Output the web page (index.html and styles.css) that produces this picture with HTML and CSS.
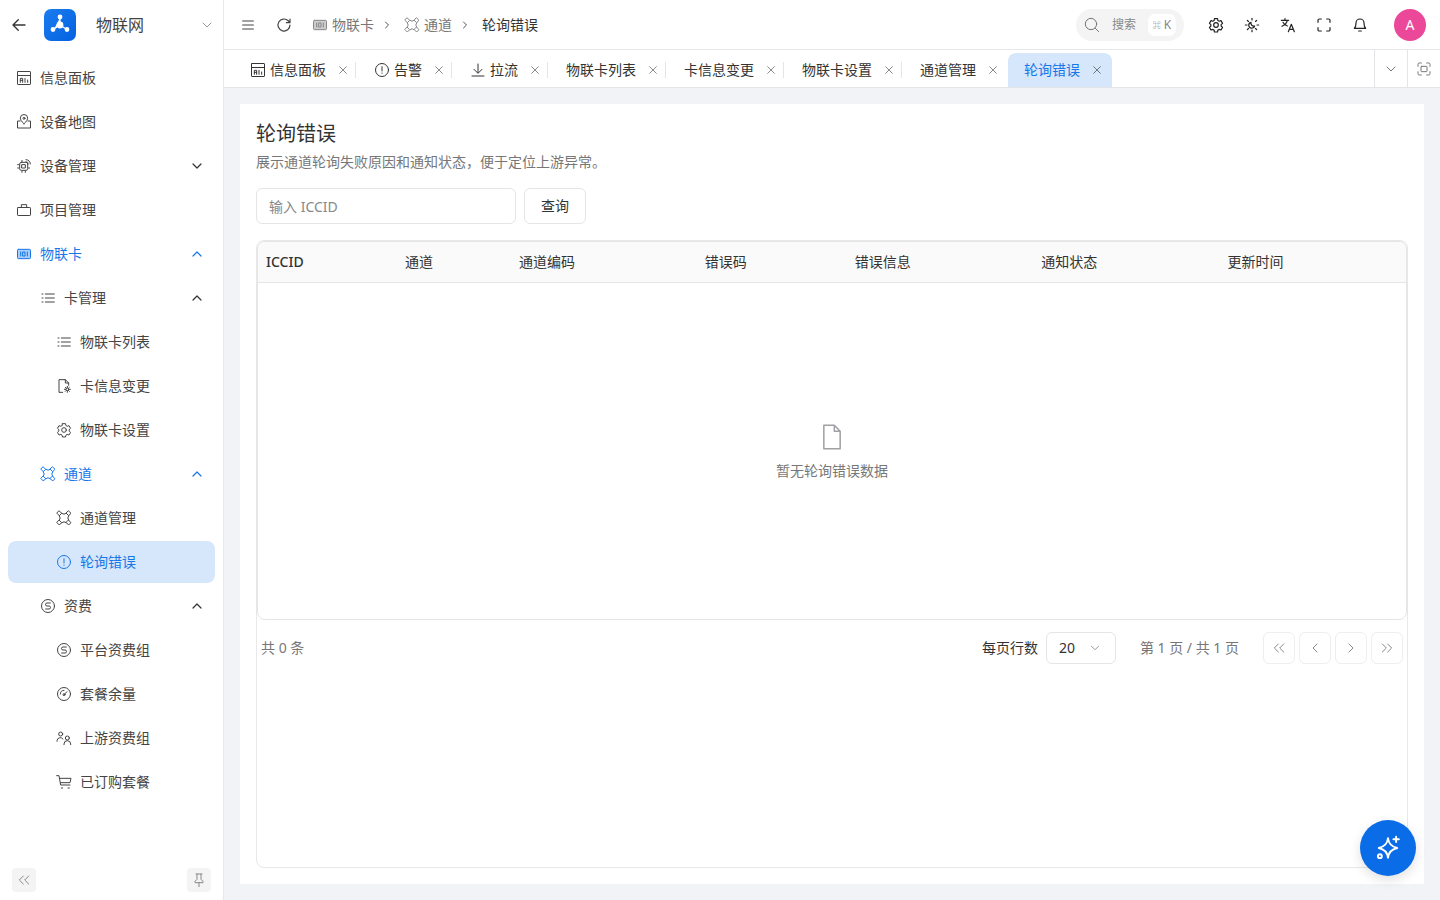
FILE: index.html
```html
<!DOCTYPE html>
<html>
<head>
    <title>轮询错误</title>
    <link rel="stylesheet" href="styles.css">
</head>
<body>
<svg width="0" height="0" class="sprite">
    <defs>
        <symbol id="i-dash" viewBox="0 0 24 24"><rect x="2.250" y="2.250" width="19.500" height="19.500" rx=".8"/><path d="M2.250 8.250h19.500M6.500 18.500v-6h3.500v6M6.500 15.500h3.500M13.500 18.500v-6M17.500 18.500v-3.500"/></symbol>
        <symbol id="i-map" viewBox="0 0 24 24"><path d="M12 14.500s5.500-3.800 5.500-8.200a5.500 5.500 0 0 0-11 0c0 4.400 5.500 8.200 5.500 8.200z"/><circle cx="12" cy="6.500" r="1.500"/><path d="M6 10.500H2.250v10.500h19.500V10.500H18"/></symbol>
        <symbol id="i-chip" viewBox="0 0 24 24"><rect x="5.500" y="6.500" width="12" height="12" rx="2.500"/><rect x="9" y="10" width="5" height="5"/><path d="M9 3.500v2M2.500 10h2M2.500 15h2M9 19.500v2M14 19.500v2M18.500 15h2M15 2.500a6 6 0 0 1 6.500 6.500M15 5.500a3.500 3.500 0 0 1 3.500 3.500"/></symbol>
        <symbol id="i-bag" viewBox="0 0 24 24"><rect x="2.250" y="8.250" width="19.500" height="12" rx="1"/><path d="M8 8.250V4h8v4.250"/></symbol>
        <symbol id="i-card" viewBox="0 0 24 24"><rect class="tint" x="2.250" y="5" width="19.500" height="14" rx="1.500"/><path d="M7 9v6M10.500 9h3v6h-3zM17 9v6"/></symbol>
        <symbol id="i-list" viewBox="0 0 24 24"><path d="M8 6h13.500M8 12h13.500M8 18h13.500M3 6h1.500M3 12h1.500M3 18h1.500"/></symbol>
        <symbol id="i-fileset" viewBox="0 0 24 24"><path d="M10 21.500H4.500v-19H14l5 5v3.500M14 2.500v5h5"/><circle cx="17" cy="17" r="2"/><path d="M17 12.500v2M17 19.500v2M12.500 17h2M19.500 17h2M14 14l1.400 1.400M18.600 18.600L20 20M20 14l-1.400 1.400M15.400 18.600L14 20"/></symbol>
        <symbol id="i-gear" viewBox="0 0 24 24"><path d="M9.700 2.500h4.600l.6 2.800 1.900 1.100 2.700-.9 2.300 4-2.100 1.900v2.200l2.100 1.900-2.300 4-2.700-.9-1.900 1.100-.6 2.800H9.700l-.6-2.800-1.900-1.100-2.700.9-2.300-4 2.100-1.900v-2.200L2.200 9.500l2.300-4 2.700.9 1.900-1.100z"/><circle cx="12" cy="12" r="3.500"/></symbol>
        <symbol id="i-channel" viewBox="0 0 24 24"><path d="M5 1.500L8.500 5 5 8.500 1.500 5zM19 1.500L22.500 5 19 8.500 15.500 5zM5 15.500L8.500 19 5 22.500 1.500 19zM19 15.500L22.500 19 19 22.500 15.500 19z"/><path d="M8.500 5Q12 8 15.500 5M8.500 19Q12 16 15.500 19M5 8.500Q8 12 5 15.500M19 8.500Q16 12 19 15.500"/></symbol>
        <symbol id="i-alert" viewBox="0 0 24 24"><circle cx="12" cy="12" r="9.750"/><path d="M12 7v6.500M12 16.500v.5"/></symbol>
        <symbol id="i-money" viewBox="0 0 24 24"><circle cx="12" cy="12" r="9.750"/><path d="M15.500 7.500H10.500a2.200 2.200 0 0 0 0 4.500h3a2.200 2.200 0 0 1 0 4.500H8.500"/></symbol>
        <symbol id="i-gauge" viewBox="0 0 24 24"><circle cx="12" cy="12" r="9.750"/><circle cx="12" cy="13" r="1.500"/><path d="M13 12l3.500-3.500M6.500 12a5.500 5.500 0 0 1 5.500-5.500"/></symbol>
        <symbol id="i-users" viewBox="0 0 24 24"><circle cx="7" cy="6" r="3"/><path d="M1.500 17v-1a5 5 0 0 1 9-2.500"/><circle cx="17" cy="12" r="3"/><path d="M12 22v-1a5 5 0 0 1 10 0v1"/></symbol>
        <symbol id="i-cart" viewBox="0 0 24 24"><path d="M1 2.500h3.500l2.500 14h14M6 6.500h16.500l-1.500 6.500H7"/><path d="M8 21h2M18 21h2"/></symbol>
        <symbol id="i-down" viewBox="0 0 24 24"><path d="M6 9l6 6 6-6"/></symbol>
        <symbol id="i-up" viewBox="0 0 24 24"><path d="M6 15l6-6 6 6"/></symbol>
        <symbol id="i-right" viewBox="0 0 24 24"><path d="M9 6l6 6-6 6"/></symbol>
        <symbol id="i-left" viewBox="0 0 24 24"><path d="M15 6l-6 6 6 6"/></symbol>
        <symbol id="i-dleft" viewBox="0 0 24 24"><path d="M11 6l-6 6 6 6M19 6l-6 6 6 6"/></symbol>
        <symbol id="i-dright" viewBox="0 0 24 24"><path d="M5 6l6 6-6 6M13 6l6 6-6 6"/></symbol>
        <symbol id="i-x" viewBox="0 0 24 24"><path d="M4 4l16 16M20 4L4 20"/></symbol>
        <symbol id="i-download" viewBox="0 0 24 24"><path d="M12 3v13M6 11l6 6 6-6M3 21h18"/></symbol>
    </defs>
</svg>

<div class="app">
    <aside class="sidebar">
        <div class="side-head">
            <svg class="back" viewBox="0 0 24 24"><path d="M20 12H4M11 5l-7 7 7 7"/></svg>
            <div class="logo">
                <svg viewBox="0 0 32 32"><path d="M16 9v7l-6 4M16 16l6 4"/><circle cx="16" cy="16" r="2.800"/><circle cx="16" cy="8" r="1.800"/><circle cx="9" cy="20.500" r="1.800"/><circle cx="23" cy="20.500" r="1.800"/></svg>
            </div>
            <span class="brand">物联网</span>
            <svg class="ico brand-caret"><use href="#i-down"/></svg>
        </div>
        <nav class="menu">
            <a class="item"><svg class="ico"><use href="#i-dash"/></svg><span>信息面板</span></a>
            <a class="item"><svg class="ico"><use href="#i-map"/></svg><span>设备地图</span></a>
            <a class="item"><svg class="ico"><use href="#i-chip"/></svg><span>设备管理</span><svg class="ico caret"><use href="#i-down"/></svg></a>
            <a class="item"><svg class="ico"><use href="#i-bag"/></svg><span>项目管理</span></a>
            <a class="item open"><svg class="ico"><use href="#i-card"/></svg><span>物联卡</span><svg class="ico caret"><use href="#i-up"/></svg></a>
            <a class="item lv2"><svg class="ico"><use href="#i-list"/></svg><span>卡管理</span><svg class="ico caret"><use href="#i-up"/></svg></a>
            <a class="item lv3"><svg class="ico"><use href="#i-list"/></svg><span>物联卡列表</span></a>
            <a class="item lv3"><svg class="ico"><use href="#i-fileset"/></svg><span>卡信息变更</span></a>
            <a class="item lv3"><svg class="ico"><use href="#i-gear"/></svg><span>物联卡设置</span></a>
            <a class="item lv2 open"><svg class="ico"><use href="#i-channel"/></svg><span>通道</span><svg class="ico caret"><use href="#i-up"/></svg></a>
            <a class="item lv3"><svg class="ico"><use href="#i-channel"/></svg><span>通道管理</span></a>
            <a class="item lv3 active"><svg class="ico"><use href="#i-alert"/></svg><span>轮询错误</span></a>
            <a class="item lv2"><svg class="ico"><use href="#i-money"/></svg><span>资费</span><svg class="ico caret"><use href="#i-up"/></svg></a>
            <a class="item lv3"><svg class="ico"><use href="#i-money"/></svg><span>平台资费组</span></a>
            <a class="item lv3"><svg class="ico"><use href="#i-gauge"/></svg><span>套餐余量</span></a>
            <a class="item lv3"><svg class="ico"><use href="#i-users"/></svg><span>上游资费组</span></a>
            <a class="item lv3"><svg class="ico"><use href="#i-cart"/></svg><span>已订购套餐</span></a>
        </nav>
        <div class="side-foot">
            <button class="foot-btn"><svg class="ico"><use href="#i-dleft"/></svg></button>
            <button class="foot-btn"><svg class="ico" viewBox="0 0 24 24"><path d="M7.500 3h9M9 3v8l-3 3v2h12v-2l-3-3V3M12 16v6"/></svg></button>
        </div>
    </aside>

    <div class="main">
        <header class="topbar">
            <svg class="top-ico" viewBox="0 0 24 24"><path d="M4 6h16M4 12h16M4 18h16"/></svg>
            <svg class="top-ico" viewBox="0 0 24 24"><path d="M21 12a9 9 0 1 1-2.700-6.400L21 8.500M21 3v5.500h-5.500"/></svg>
            <div class="crumbs">
                <span class="crumb"><svg class="ico"><use href="#i-card"/></svg>物联卡</span>
                <svg class="ico sep"><use href="#i-right"/></svg>
                <span class="crumb"><svg class="ico"><use href="#i-channel"/></svg>通道</span>
                <svg class="ico sep"><use href="#i-right"/></svg>
                <span class="crumb now">轮询错误</span>
            </div>
            <div class="top-right">
                <div class="search">
                    <svg class="ico" viewBox="0 0 24 24"><circle cx="10.500" cy="10.500" r="8.500"/><path d="M17 17l5 5"/></svg>
                    <span class="search-text">搜索</span>
                    <span class="kbd"><i>⌘</i>K</span>
                </div>
                <svg class="tool"><use href="#i-gear"/></svg>
                <svg class="tool" viewBox="0 0 24 24"><path d="M12 2v2.500M12 19.500V22M2 12h2.500M19.500 12H22M5 5l1.700 1.700M17.300 17.300L19 19M5 19l1.700-1.700M17.300 6.700L19 5"/><path d="M16 13.500A4.500 4.500 0 0 1 10.500 8a4.500 4.500 0 1 0 5.500 5.500z"/></svg>
                <svg class="tool" viewBox="0 0 24 24"><path d="M2 5h11M7.500 2.500V5M11 5c-1 4-4 7-8 9M4.500 8c1.200 2.500 3.500 4.500 6.500 5.500M12.500 22l4.500-11 4.500 11M14 18.500h6"/></svg>
                <svg class="tool" viewBox="0 0 24 24"><path d="M8 3H5a2 2 0 0 0-2 2v3M16 3h3a2 2 0 0 1 2 2v3M8 21H5a2 2 0 0 1-2-2v-3M16 21h3a2 2 0 0 0 2-2v-3"/></svg>
                <svg class="tool" viewBox="0 0 24 24"><path d="M6 9a6 6 0 0 1 12 0c0 6 2.500 8 2.500 8h-17S6 15 6 9zM10 21h4"/></svg>
                <span class="avatar">A</span>
            </div>
        </header>

        <div class="tabbar">
            <div class="tabs">
                <div class="tab"><svg class="ico"><use href="#i-dash"/></svg><span>信息面板</span><svg class="ico close"><use href="#i-x"/></svg></div>
                <div class="tab"><svg class="ico"><use href="#i-alert"/></svg><span>告警</span><svg class="ico close"><use href="#i-x"/></svg></div>
                <div class="tab"><svg class="ico"><use href="#i-download"/></svg><span>拉流</span><svg class="ico close"><use href="#i-x"/></svg></div>
                <div class="tab"><span>物联卡列表</span><svg class="ico close"><use href="#i-x"/></svg></div>
                <div class="tab"><span>卡信息变更</span><svg class="ico close"><use href="#i-x"/></svg></div>
                <div class="tab"><span>物联卡设置</span><svg class="ico close"><use href="#i-x"/></svg></div>
                <div class="tab last"><span>通道管理</span><svg class="ico close"><use href="#i-x"/></svg></div>
                <div class="tab current"><span>轮询错误</span><svg class="ico close"><use href="#i-x"/></svg></div>
            </div>
            <div class="tab-tool"><svg class="ico"><use href="#i-down"/></svg></div>
            <div class="tab-tool"><svg class="ico" viewBox="0 0 24 24"><path d="M8 3H5a2 2 0 0 0-2 2v3M16 3h3a2 2 0 0 1 2 2v3M8 21H5a2 2 0 0 1-2-2v-3M16 21h3a2 2 0 0 0 2-2v-3"/><rect x="7.500" y="8" width="9" height="8" rx="1"/></svg></div>
        </div>

        <main class="content">
            <section class="panel">
                <h1>轮询错误</h1>
                <p class="desc">展示通道轮询失败原因和通知状态，便于定位上游异常。</p>
                <div class="filter">
                    <input class="iccid" placeholder="输入 ICCID">
                    <button class="query">查询</button>
                </div>
                <div class="table-box">
                    <div class="table-wrap">
                        <div class="thead">
                            <span class="c1">ICCID</span>
                            <span class="c2">通道</span>
                            <span class="c3">通道编码</span>
                            <span class="c4">错误码</span>
                            <span class="c5">错误信息</span>
                            <span class="c5">通知状态</span>
                            <span class="c5">更新时间</span>
                        </div>
                        <div class="empty">
                            <svg viewBox="0 0 24 24"><path d="M5 2h9l5 5v15H5zM14 2v5h5"/></svg>
                            <span>暂无轮询错误数据</span>
                        </div>
                    </div>
                    <div class="pager">
                        <span class="total">共 0 条</span>
                        <div class="pager-right">
                            <span class="per">每页行数</span>
                            <div class="select"><span>20</span><svg class="ico"><use href="#i-down"/></svg></div>
                            <span class="pageno">第 1 页 / 共 1 页</span>
                            <div class="page-btns">
                                <button><svg class="ico"><use href="#i-dleft"/></svg></button>
                                <button><svg class="ico"><use href="#i-left"/></svg></button>
                                <button><svg class="ico"><use href="#i-right"/></svg></button>
                                <button><svg class="ico"><use href="#i-dright"/></svg></button>
                            </div>
                        </div>
                    </div>
                </div>
            </section>
        </main>
    </div>
</div>

<button class="fab">
    <svg viewBox="0 0 24 24"><path d="M12 3c.6 5 3 7.800 8.500 9-5.500 1.200-7.900 4-8.500 9-.6-5-3-7.800-8.500-9 5.500-1.200 7.900-4 8.500-9zM19.500 1.500v5M17 4h5"/><circle cx="4.500" cy="19.500" r="1.800"/></svg>
</button>
</body>
</html>
```

FILE: styles.css
```css
* { box-sizing: border-box; }
html, body { margin: 0; height: 100%; overflow: hidden; }
body {
    font-family: "Noto Sans", "Noto Sans CJK SC", sans-serif;
    font-size: 14px;
    line-height: 20px;
    color: #333;
    background: #f1f3f6;
}
a { color: inherit; text-decoration: none; }
button { font: inherit; color: inherit; background: none; padding: 0; cursor: pointer; }
svg { fill: none; stroke: currentColor; stroke-width: 1.5; stroke-linecap: round; stroke-linejoin: round; flex: none; }
.sprite { position: absolute; }
.ico { width: 16px; height: 16px; }
.tint { fill: var(--tint, none); }

.app { display: flex; height: 900px; }

/* sidebar */
.sidebar {
    width: 224px;
    flex: none;
    display: flex;
    flex-direction: column;
    background: #fff;
    border-right: 1px solid #e6e8eb;
}
.side-head { height: 50px; display: flex; align-items: center; padding-left: 10px; }
.back { width: 18px; height: 18px; color: #333; stroke-width: 1.8; }
.logo {
    width: 32px;
    height: 32px;
    margin-left: 16px;
    border-radius: 7px;
    background: linear-gradient(135deg, #1a7df0, #0460e0);
    color: #fff;
}
.logo svg { display: block; width: 32px; height: 32px; stroke-width: 1.2; fill: #fff; stroke: #fff; }
.brand { margin-left: 20px; font-size: 16px; color: #444; }
.brand-caret { margin-left: auto; margin-right: 8px; color: #999; }

.menu { display: flex; flex-direction: column; gap: 2px; padding: 7px 8px 0; }
.item {
    height: 42px;
    display: flex;
    align-items: center;
    padding-left: 8px;
    gap: 8px;
    border-radius: 8px;
    color: #444;
}
.item .ico { color: #444; }
.item .caret { margin-left: auto; margin-right: 10px; stroke-width: 1.8; color: #333; }
.item.lv2 { padding-left: 32px; }
.item.lv3 { padding-left: 48px; }
.item.open, .item.open .ico { color: #1677e8; }
.item.open .ico:first-child { --tint: #a9cdf8; }
.item.active, .item.active .ico { color: #1677e8; }
.item.active { background: #d6e6fb; }

.side-foot { margin-top: auto; height: 32px; display: flex; justify-content: space-between; padding: 0 12px; align-items: flex-start; }
.foot-btn { width: 24px; height: 24px; border: 0; border-radius: 4px; background: #f4f4f5; color: #888; display: flex; align-items: center; justify-content: center; }

/* top */
.main { flex: 1; min-width: 0; display: flex; flex-direction: column; }
.topbar {
    height: 50px;
    flex: none;
    display: flex;
    align-items: center;
    background: #fff;
    border-bottom: 1px solid #e6e8eb;
    padding: 0 14px 0 16px;
    color: #444;
}
.top-ico { width: 16px; height: 16px; margin-right: 20px; stroke-width: 1.8; }
.crumbs { display: flex; align-items: center; color: #777; }
.crumb { display: flex; align-items: center; gap: 4px; }
.crumb .ico { color: #888; --tint: #ccc; }
.crumb.now { color: #333; }
.sep { width: 12px; height: 12px; margin: 0 11px 0 7px; color: #555; stroke-width: 2; }
.top-right { margin-left: auto; display: flex; align-items: center; }
.search {
    width: 108px;
    height: 32px;
    border-radius: 16px;
    background: #f4f4f5;
    display: flex;
    align-items: center;
    padding: 0 8px;
    color: #777;
}
.search-text { font-size: 12px; margin-left: 12px; color: #888; }
.kbd {
    margin-left: auto;
    width: 28px;
    height: 22px;
    background: #fff;
    border-radius: 7px;
    font-size: 12px;
    color: #888;
    display: flex;
    align-items: center;
    justify-content: center;
    gap: 3px;
}
.kbd i { font-style: normal; font-size: 8px; font-weight: 700; }
.tool { width: 16px; height: 16px; margin-left: 20px; color: #222; stroke-width: 1.8; }
.search + .tool { margin-left: 24px; }
.avatar {
    width: 32px;
    height: 32px;
    margin-left: 26px;
    border-radius: 50%;
    background: #ec4899;
    color: #fff;
    display: flex;
    align-items: center;
    justify-content: center;
}

/* tabs */
.tabbar { height: 38px; flex: none; display: flex; background: #fff; border-bottom: 1px solid #e3e5e8; }
.tabs { flex: 1; display: flex; align-items: flex-end; padding-left: 7px; }
.tab {
    height: 34px;
    display: flex;
    align-items: center;
    padding: 0 7px 0 19px;
    position: relative;
    color: #333;
}
.tab .ico:first-child { margin-right: 4px; }
.tab .close { width: 10px; height: 10px; margin-left: 12px; color: #444; }
.tab:not(.current):not(.last)::after {
    content: "";
    position: absolute;
    right: -1px;
    top: 9px;
    height: 16px;
    width: 1px;
    background: #e3e5e8;
}
.tab.current { margin-left: 3px; background: #d6e6fb; color: #1677e8; border-radius: 8px 8px 0 0; padding: 0 10px 0 16px; }
.tab.current .close { color: #333; }
.tab-tool { width: 33px; border-left: 1px solid #e3e5e8; display: flex; align-items: center; justify-content: center; color: #777; }

/* content */
.content { flex: 1; min-height: 0; padding: 16px; }
.panel { height: 100%; background: #fff; padding: 16px; display: flex; flex-direction: column; }
h1 { margin: 0; font-size: 20px; font-weight: 400; line-height: 28px; color: #333; }
.desc { margin: 4px 0 0; line-height: 20px; color: #777; }
.filter { display: flex; gap: 8px; margin-top: 16px; }
.iccid {
    width: 260px;
    height: 36px;
    border: 1px solid #e5e5e5;
    border-radius: 6px;
    padding: 0 12px;
    font: inherit;
    outline: none;
}
.iccid::placeholder { color: #888; }
.query { width: 62px; height: 36px; border: 1px solid #e5e5e5; border-radius: 6px; background: #fff; color: #333; }
.table-box { flex: 1; margin-top: 16px; border: 1px solid #e8e8e8; border-radius: 8px; display: flex; flex-direction: column; }
.table-wrap { height: 379px; border: 1px solid #e5e5e5; border-radius: 8px; display: flex; flex-direction: column; }
.thead {
    height: 41px;
    flex: none;
    display: flex;
    align-items: center;
    background: #fafafa;
    border-bottom: 1px solid #e5e5e5;
    border-radius: 8px 8px 0 0;
    color: #333;
}
.thead span { padding-left: 8px; }
.c1 { width: 139px; font-weight: 500; }
.c2 { width: 114px; }
.c3 { width: 186px; }
.c4 { width: 150px; }
.c5 { width: 186.500px; }
.empty { flex: 1; display: flex; flex-direction: column; align-items: center; justify-content: center; gap: 10px; padding-top: 2px; color: #777; }
.empty svg { width: 28px; height: 28px; color: #a0a0a5; stroke-width: 1.300; }
.pager { height: 56px; display: flex; align-items: center; padding: 0 4px; }
.total { color: #777; }
.pager-right { margin-left: auto; display: flex; align-items: center; }
.per { color: #333; }
.select {
    width: 70px;
    height: 32px;
    margin-left: 8px;
    border: 1px solid #e5e5e5;
    border-radius: 6px;
    display: flex;
    align-items: center;
    padding: 0 13px 0 12px;
    justify-content: space-between;
}
.select .ico { width: 14px; height: 14px; color: #888; }
.pageno { margin-left: 24px; color: #777; }
.page-btns { display: flex; gap: 4px; margin-left: 24px; }
.page-btns button { width: 32px; height: 32px; border: 1px solid #eee; border-radius: 6px; color: #888; display: flex; align-items: center; justify-content: center; }
.page-btns .ico { width: 16px; height: 16px; }

.fab {
    position: fixed;
    right: 24px;
    bottom: 24px;
    width: 56px;
    height: 56px;
    border: 0;
    border-radius: 50%;
    background: #0a6ce6;
    color: #fff;
    display: flex;
    align-items: center;
    justify-content: center;
    box-shadow: 0 4px 12px rgba(0,0,0,.12);
}
.fab svg { width: 26px; height: 26px; stroke-width: 1.800; }
```
